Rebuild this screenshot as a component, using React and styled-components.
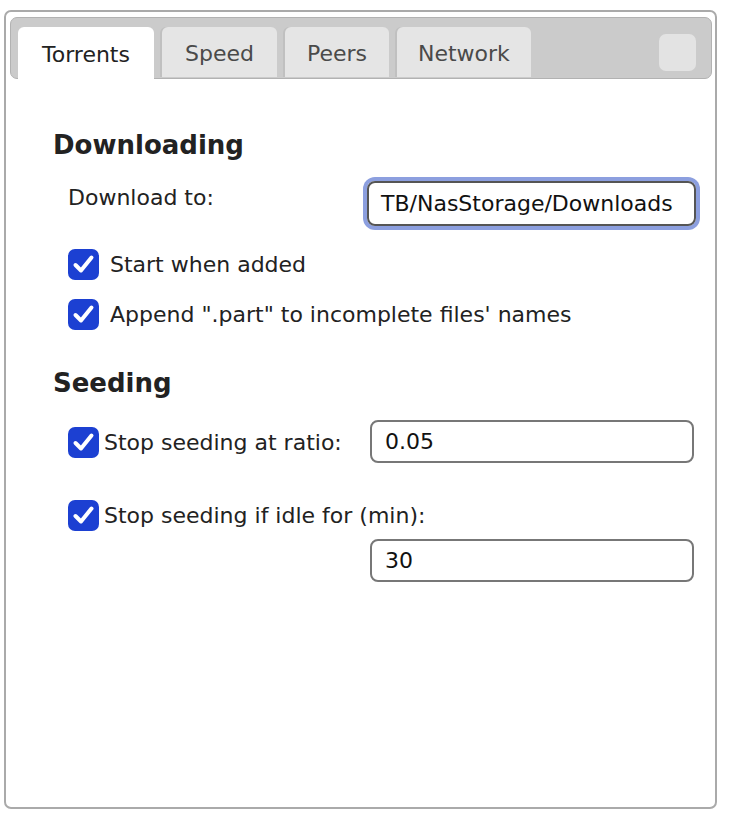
import React from "react";
import styled, { createGlobalStyle } from "styled-components";

const Global = createGlobalStyle`
  html, body {
    margin: 0;
    padding: 0;
    background: #fff;
  }
  body {
    font-family: "DejaVu Sans", Verdana, sans-serif;
    color: #222;
  }
`;

const Dialog = styled.div`
  box-sizing: border-box;
  margin: 10px 0 0 4px;
  width: 713px;
  height: 799px;
  border: 2px solid #aaa;
  border-radius: 7px;
  padding: 5px 3px 0 4px;
  display: flex;
  flex-direction: column;
`;

const TabBar = styled.div`
  box-sizing: border-box;
  height: 62px;
  background: #cbcbcb;
  border: 1px solid #b2b2b2;
  border-radius: 7px;
  padding: 9px 15px 0 7px;
  display: flex;
  align-items: flex-end;
  gap: 8px;
`;

const Tab = styled.div`
  box-sizing: border-box;
  height: ${(p) => (p.$active ? "52px" : "50px")};
  margin-bottom: ${(p) => (p.$active ? "-1px" : "0")};
  align-self: flex-start;
  padding: 2px ${(p) => p.$px || 23}px 0;
  display: flex;
  align-items: center;
  font-size: 22px;
  color: ${(p) => (p.$active ? "#222" : "#4a4a4a")};
  background: ${(p) => (p.$active ? "#fff" : "#e5e5e5")};
  border-radius: 6px 6px 0 0;
  box-shadow: ${(p) => (p.$active ? "none" : "-2px 0 0 #c0c0c0")};
`;

const Spacer = styled.div`
  flex: 1;
`;

const SquareButton = styled.div`
  align-self: flex-start;
  margin-top: 7px;
  width: 37px;
  height: 37px;
  border-radius: 7px;
  background: #e3e3e3;
`;

const Panel = styled.div`
  padding: 51px 16px 0 43px;
`;

const Heading = styled.h2`
  margin: ${(p) => p.$top || 0}px 0 0;
  font-size: 26px;
  line-height: 30px;
  font-weight: bold;
  color: #222;
`;

const Section = styled.div`
  padding-left: 15px;
`;

const FieldRow = styled.div`
  display: grid;
  grid-template-columns: 1fr ${(p) => p.$inputWidth}px;
  align-items: start;
  margin-top: ${(p) => p.$top}px;
  margin-right: ${(p) => p.$right || 0}px;
  row-gap: 8px;
`;

const Label = styled.span`
  font-size: 22px;
  line-height: 26px;
  padding-top: ${(p) => p.$pad || 0}px;
  color: #222;
  white-space: nowrap;
`;

const TextInput = styled.div`
  box-sizing: border-box;
  height: ${(p) => p.$h}px;
  border: 2px solid ${(p) => (p.$focused ? "#555" : "#777")};
  border-radius: 8px;
  box-shadow: ${(p) => (p.$focused ? "0 0 0 4px #8c9fdf" : "none")};
  padding-left: ${(p) => p.$pl}px;
  display: flex;
  align-items: center;
  font-size: 22px;
  color: #111;
  white-space: nowrap;
  overflow: hidden;
`;

const CheckRow = styled.label`
  display: flex;
  align-items: center;
  gap: ${(p) => p.$gap}px;
  height: 31px;
  margin-top: ${(p) => p.$top}px;
  font-size: 22px;
  color: #222;
  white-space: nowrap;
  grid-column: ${(p) => (p.$span ? "1 / -1" : "auto")};
`;

const Box = styled.span`
  flex: none;
  width: 31px;
  height: 31px;
  border-radius: 7px;
  background: #1c40d2;
  display: flex;
  align-items: center;
  justify-content: center;
`;

function Check() {
  return (
    <Box>
      <svg width="25" height="25" viewBox="0 0 25 25">
        <path
          d="M4.5 13 L10 18.5 L20.5 5.5"
          fill="none"
          stroke="#fff"
          strokeWidth="4"
          strokeLinecap="round"
          strokeLinejoin="round"
        />
      </svg>
    </Box>
  );
}

const EmptyCell = styled.div``;

export default function App() {
  return (
    <>
      <Global />
      <Dialog>
        <TabBar>
          <Tab $active $px={24}>Torrents</Tab>
          <Tab>Speed</Tab>
          <Tab $px={22}>Peers</Tab>
          <Tab $px={21}>Network</Tab>
          <Spacer />
          <SquareButton />
        </TabBar>
        <Panel>
          <Heading>Downloading</Heading>
          <Section>
            <FieldRow $inputWidth={329} $top={21}>
              <Label $pad={4}>Download to:</Label>
              <TextInput $focused $h={45} $pl={12}>
                TB/NasStorage/Downloads
              </TextInput>
            </FieldRow>
            <CheckRow $gap={11} $top={23}>
              <Check />
              Start when added
            </CheckRow>
            <CheckRow $gap={11} $top={19}>
              <Check />
              Append ".part" to incomplete files' names
            </CheckRow>
          </Section>
          <Heading $top={38}>Seeding</Heading>
          <Section>
            <FieldRow $inputWidth={324} $top={22} $right={2}>
              <CheckRow $gap={5} $top={7}>
                <Check />
                Stop seeding at ratio:
              </CheckRow>
              <TextInput $h={43} $pl={13}>
                0.05
              </TextInput>
            </FieldRow>
            <FieldRow $inputWidth={324} $top={37} $right={2}>
              <CheckRow $gap={5} $top={0} $span>
                <Check />
                Stop seeding if idle for (min):
              </CheckRow>
              <EmptyCell />
              <TextInput $h={43} $pl={13}>
                30
              </TextInput>
            </FieldRow>
          </Section>
        </Panel>
      </Dialog>
    </>
  );
}
